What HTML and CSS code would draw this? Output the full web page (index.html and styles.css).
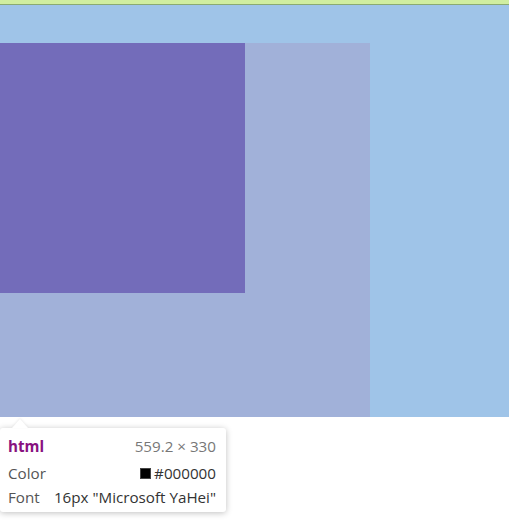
FILE: index.html
```html
<!DOCTYPE html>
<html>
<head>
<meta charset="utf-8">
<link rel="stylesheet" href="styles.css">
</head>
<body>
<div class="topbar"></div>
<div class="stage">
  <div class="outer">
    <div class="inner"></div>
  </div>
</div>
<div class="tooltip">
  <div class="arrow"></div>
  <div class="row head"><span class="tag">html</span><span class="dim">559.2 × 330</span></div>
  <div class="row"><span class="label">Color</span><span class="val"><span class="swatch"></span>#000000</span></div>
  <div class="row"><span class="label">Font</span><span class="val">16px "Microsoft YaHei"</span></div>
</div>
</body>
</html>
```
FILE: styles.css
```css
html, body { margin: 0; padding: 0; background: #fff; }
body { font-family: "Open Sans", "Noto Sans", sans-serif; position: relative; width: 509px; height: 529px; overflow: hidden; }
.topbar { height: 4px; background: #d0eea0; border-bottom: 1px solid #8aaa72; }
.stage { height: 412px; background: #9fc4e8; padding-top: 38px; box-sizing: border-box; }
.outer { width: 370px; height: 374px; background: #a1b1d9; }
.inner { width: 245px; height: 250px; background: #736cba; }
.tooltip {
  position: absolute; left: 0; top: 428px; width: 226px; height: 84px; box-sizing: border-box;
  background: #fff; border-radius: 3px; padding: 6px 10px 3px 8px;
  box-shadow: 0 1px 6px rgba(0,0,0,0.25);
  font-size: 15.2px; color: #333;
}
.arrow {
  position: absolute; left: 12px; top: -9px; width: 0; height: 0;
  border-left: 8px solid transparent; border-right: 8px solid transparent;
  border-bottom: 9px solid #fff;
  filter: drop-shadow(0 -1px 1px rgba(0,0,0,0.08));
}
.row { display: flex; justify-content: space-between; align-items: center; height: 24px; line-height: 24px; }
.head { margin-bottom: 3px; }
.tag { color: #881280; font-weight: bold; }
.dim { color: #777; }
.label { color: #555; }
.val { color: #333; display: flex; align-items: center; }
.swatch { display: inline-block; width: 11px; height: 11px; background: #000; margin-right: 3px; box-sizing: border-box; border: 1px solid #444; }
```
